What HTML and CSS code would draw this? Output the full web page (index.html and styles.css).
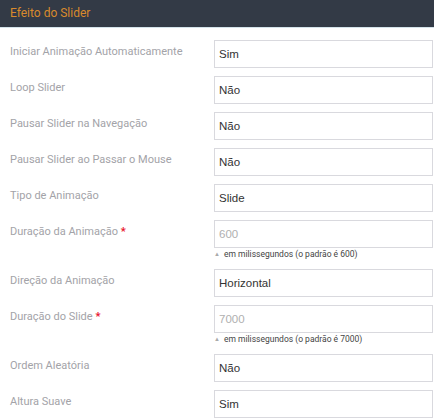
FILE: index.html
```html
<!DOCTYPE html>
<html>
<head>
<meta charset="utf-8">
<link rel="stylesheet" href="styles.css">
</head>
<body>
<div class="panel">
  <div class="panel-head">Efeito do Slider</div>
  <div class="panel-body">
    <div class="row"><label class="lbl">Iniciar Animação Automaticamente</label><div class="field"><div class="input">Sim</div></div></div>
    <div class="row"><label class="lbl">Loop Slider</label><div class="field"><div class="input">Não</div></div></div>
    <div class="row"><label class="lbl">Pausar Slider na Navegação</label><div class="field"><div class="input">Não</div></div></div>
    <div class="row"><label class="lbl">Pausar Slider ao Passar o Mouse</label><div class="field"><div class="input">Não</div></div></div>
    <div class="row"><label class="lbl">Tipo de Animação</label><div class="field"><div class="input">Slide</div></div></div>
    <div class="row"><label class="lbl">Duração da Animação <span class="req">*</span></label><div class="field"><div class="input ph">600</div><div class="hint"><span class="tri">▲</span>em milissegundos (o padrão é 600)</div></div></div>
    <div class="row"><label class="lbl">Direção da Animação</label><div class="field"><div class="input">Horizontal</div></div></div>
    <div class="row"><label class="lbl">Duração do Slide <span class="req">*</span></label><div class="field"><div class="input ph">7000</div><div class="hint"><span class="tri">▲</span>em milissegundos (o padrão é 7000)</div></div></div>
    <div class="row"><label class="lbl">Ordem Aleatória</label><div class="field"><div class="input">Não</div></div></div>
    <div class="row"><label class="lbl">Altura Suave</label><div class="field"><div class="input">Sim</div></div></div>
  </div>
</div>
</body>
</html>
```
FILE: styles.css
```css
html, body {
  margin: 0;
  padding: 0;
  background: #fff;
}
body {
  font-family: Roboto, "Noto Sans", sans-serif;
  overflow: hidden;
}
.panel-head {
  background: #333a46;
  color: #d98a2c;
  font-size: 12px;
  height: 27px;
  line-height: 27px;
  padding-left: 10px;
  border-bottom: 1px solid #d4e2ea;
}
.panel-body {
  padding: 12px 1px 0 10px;
  display: flex;
  flex-direction: column;
  gap: 8px;
}
.row {
  display: flex;
  align-items: flex-start;
}
.lbl {
  width: 204px;
  flex: none;
  color: #a3a3a8;
  font-size: 11px;
  line-height: 14px;
  padding-top: 5px;
}
.req {
  color: #e8112d;
  font-weight: bold;
}
.field {
  flex: 1;
}
.input {
  height: 26px;
  border: 1px solid #d9d9de;
  font-family: "Liberation Sans", Arial, sans-serif;
  font-size: 11.5px;
  color: #333;
  line-height: 27px;
  padding-left: 4px;
}
.input.ph {
  color: #b0b0b0;
}
.hint {
  font-size: 8.5px;
  color: #444;
  line-height: 12px;
  padding-top: 0;
  height: 13px;
}
.tri {
  font-size: 6px;
  color: #aaa;
  margin-right: 4px;
  vertical-align: 1px;
}
```
